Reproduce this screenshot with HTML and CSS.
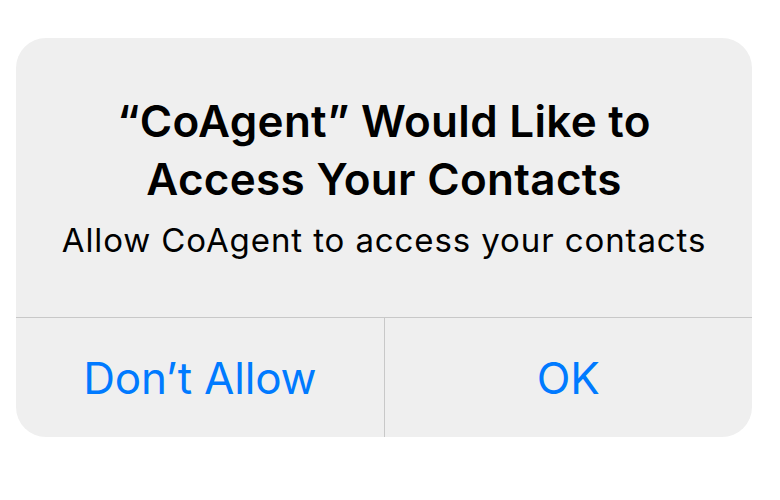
FILE: index.html
```html
<!DOCTYPE html>
<html>
<head>
<meta charset="utf-8">
<link rel="stylesheet" href="styles.css">
</head>
<body>
<div class="alert">
  <div class="content">
    <h1 class="title">“CoAgent” Would Like to<br>Access Your Contacts</h1>
    <p class="message">Allow CoAgent to access your contacts</p>
  </div>
  <div class="actions">
    <button class="action">Don’t Allow</button>
    <button class="action">OK</button>
  </div>
</div>
</body>
</html>
```
FILE: styles.css
```css
html, body {
  margin: 0;
  padding: 0;
  background: #ffffff;
}
body {
  font-family: Inter, "Noto Sans", sans-serif;
  padding: 38px 0 0 16px;
}
.alert {
  width: 736px;
  height: 399px;
  background: #efefef;
  border-radius: 30px;
  display: flex;
  flex-direction: column;
  overflow: hidden;
}
.content {
  height: 280px;
  box-sizing: border-box;
  padding-top: 54px;
  border-bottom: 1px solid #c8c8c8;
  text-align: center;
}
.title {
  margin: 0;
  font-size: 44px;
  line-height: 58px;
  font-weight: 600;
  color: #000;
  letter-spacing: 0.3px;
}
.message {
  margin: 12px 0 0;
  font-size: 33px;
  line-height: 40px;
  font-weight: 400;
  color: #000;
  letter-spacing: 0.9px;
}
.actions {
  flex: 1;
  display: flex;
}
.action {
  flex: 1;
  border: none;
  background: transparent;
  font-family: inherit;
  font-size: 44px;
  letter-spacing: -0.2px;
  color: #007aff;
  padding: 0;
  margin: 0;
}
.action + .action {
  border-left: 1px solid #c8c8c8;
}
```
